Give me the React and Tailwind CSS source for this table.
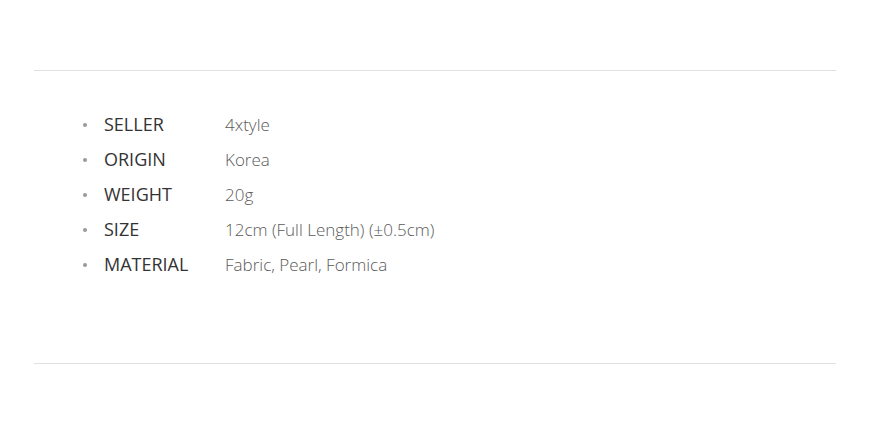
import React from "react";

const rows = [
  ["SELLER", "4xtyle"],
  ["ORIGIN", "Korea"],
  ["WEIGHT", "20g"],
  ["SIZE", "12cm (Full Length) (±0.5cm)"],
  ["MATERIAL", "Fabric, Pearl, Formica"],
];

export default function App() {
  return (
    <div className="w-[873px] h-[437px] bg-white pl-[34px] pr-[37px] pt-[70px]" style={{ fontFamily: '"Open Sans", sans-serif' }}>
      <div className="border-t border-[#e0e0e0] border-b h-[294px] flex flex-col pt-[36px] pl-[49px]">
        {rows.map(([k, v]) => (
          <div key={k} className="flex items-center h-[35px]">
            <span className="w-[4px] h-[4px] rounded-full bg-[#999] mr-[17px]" />
            <span className="w-[121px] text-[18px] text-[#333]">{k}</span>
            <span className="text-[17px] font-light text-[#5a5a5a]">{v}</span>
          </div>
        ))}
      </div>
    </div>
  );
}
